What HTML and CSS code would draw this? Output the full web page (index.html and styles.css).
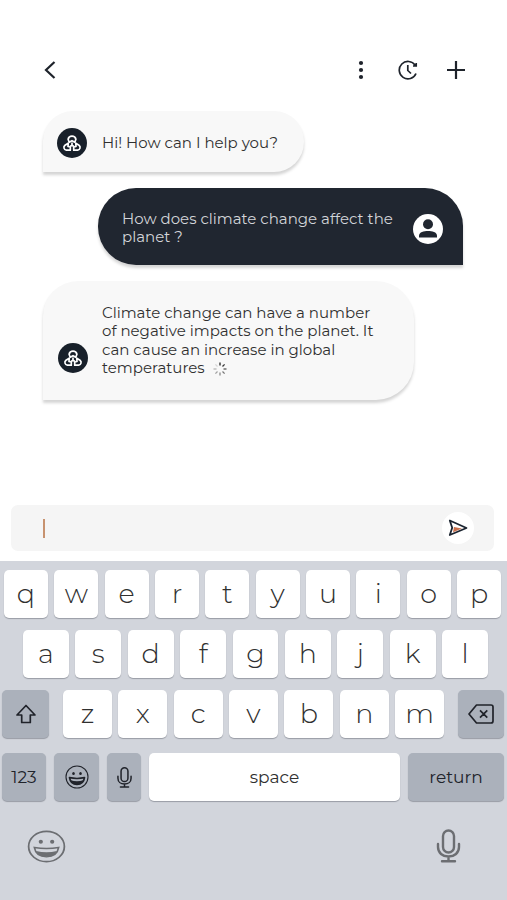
FILE: index.html
```
<!DOCTYPE html>
<html lang="en">
<head>
    <meta charset="UTF-8">
    <title>Chat</title>
    <link rel="stylesheet" href="styles.css">
</head>
<body>
    <!-- Shared icons -->
    <svg class="sprite">
        <symbol id="bot" viewBox="0 0 30 30">
            <circle cx="15" cy="15" r="15" fill="#18202a"/>
            <g fill="none" stroke="#fff" stroke-width="1.7" stroke-linejoin="round">
                <path d="M12.2 14.3 L11.1 11.3 A4 4 0 0 1 18.9 11.3 L17.8 14.3 L15 12.7 Z"/>
                <path d="M11.2 15.2 L8 17.2 A2.8 2.8 0 0 0 9.3 22.2 H13.3 V19 L11 18.5 Z"/>
                <path d="M18.8 15.2 L22 17.2 A2.8 2.8 0 0 1 20.7 22.2 H16.7 V19 L19 18.5 Z"/>
                <path d="M15 14.4 V17.2 L13 18.5 M15 17.2 L17 18.5"/>
            </g>
        </symbol>
        <symbol id="smile" viewBox="0 0 24 24">
            <circle cx="12" cy="12" r="11" fill="none" stroke="currentColor" stroke-width="1.1"/>
            <ellipse cx="8.5" cy="8.5" rx="1.3" ry="1.5" fill="currentColor"/>
            <ellipse cx="15.5" cy="8.5" rx="1.3" ry="1.5" fill="currentColor"/>
            <path d="M4.5 12.7 Q12 14.3 19.5 12.7 Q18.5 19.5 12 19.5 Q5.5 19.5 4.5 12.7 Z" fill="none" stroke="currentColor"/>
            <path d="M5.6 15.2 Q12 17.2 18.4 15.2 Q16.8 19.5 12 19.5 Q7.2 19.5 5.6 15.2 Z" fill="currentColor"/>
        </symbol>
        <symbol id="mic" viewBox="0 0 24 34">
            <g fill="none" stroke="currentColor" stroke-width="2.4" stroke-linecap="round">
                <rect x="6.5" y="1.5" width="11" height="22" rx="5.5"/>
                <path d="M1.5 15 V18 C1.5 24 6 27.5 12 27.5 S22.5 24 22.5 18 V15 M12 27.5 V32.2 M5.5 32.2 H18.5"/>
            </g>
        </symbol>
    </svg>

    <div class="phone">
        <!-- Top bar -->
        <header class="topbar">
            <svg class="icon-back" viewBox="0 0 12 18"><path d="M10.5 1 L2 9 L10.5 17"/></svg>
            <div class="actions">
                <svg class="icon-more" viewBox="0 0 6 20"><circle cx="3" cy="3" r="2.1"/><circle cx="3" cy="10" r="2.1"/><circle cx="3" cy="17" r="2.1"/></svg>
                <svg class="icon-history" viewBox="0 0 20 20">
                    <path d="M18 13.5 A8.7 8.7 0 1 1 17.2 5.3 M15 6 H18.2 V3 M9.8 5 V10.5 L13 13.5"/>
                </svg>
                <svg class="icon-plus" viewBox="0 0 20 20"><path d="M10 1 V19 M1 10 H19"/></svg>
            </div>
        </header>

        <!-- Messages -->
        <main class="chat">
            <div class="bubble bot first">
                <svg class="avatar"><use href="#bot"/></svg>
                <p>Hi! How can I help you?</p>
            </div>
            <div class="bubble user">
                <p>How does climate change affect the<br>planet ?</p>
                <svg class="avatar" viewBox="0 0 30 30">
                    <circle cx="15" cy="15" r="15" fill="#fff"/>
                    <circle cx="15" cy="10.3" r="5" fill="#202630"/>
                    <path d="M6 23.5 V21.5 C6 18 11 16.9 15 16.9 S24 18 24 21.5 V23.5 Z" fill="#202630"/>
                </svg>
            </div>
            <div class="bubble bot second">
                <svg class="avatar"><use href="#bot"/></svg>
                <p>
                    Climate change can have a number<br>
                    of negative impacts on the planet. It<br>
                    can cause an increase in global<br>
                    temperatures
                    <svg class="spinner" viewBox="0 0 14 14">
                        <g stroke="#222" stroke-width="1.3">
                            <path d="M7 .5 V3.5"/>
                            <path d="M11.6 2.4 L9.5 4.5" opacity=".9"/>
                            <path d="M13.5 7 H10.5" opacity=".75"/>
                            <path d="M11.6 11.6 L9.5 9.5" opacity=".6"/>
                            <path d="M7 13.5 V10.5" opacity=".5"/>
                            <path d="M2.4 11.6 L4.5 9.5" opacity=".4"/>
                            <path d="M.5 7 H3.5" opacity=".3"/>
                            <path d="M2.4 2.4 L4.5 4.5" opacity=".15"/>
                        </g>
                    </svg>
                </p>
            </div>
        </main>

        <!-- Message input -->
        <div class="composer">
            <span class="caret"></span>
            <button class="send">
                <svg viewBox="0 0 20 18">
                    <path d="M6 8 L14 9.5 L5 13.2 Z" fill="#c96f4c"/>
                    <path d="M1.8 1.5 L18.5 9 L1.8 16 L4.2 8.8 Z" fill="none" stroke="#1b2430" stroke-width="1.8" stroke-linejoin="round"/>
                </svg>
            </button>
        </div>

        <!-- Keyboard -->
        <div class="keyboard">
            <div class="row row-top">
                <button class="key">q</button>
                <button class="key">w</button>
                <button class="key">e</button>
                <button class="key">r</button>
                <button class="key">t</button>
                <button class="key">y</button>
                <button class="key">u</button>
                <button class="key">i</button>
                <button class="key">o</button>
                <button class="key">p</button>
            </div>
            <div class="row row-home">
                <button class="key">a</button>
                <button class="key">s</button>
                <button class="key">d</button>
                <button class="key">f</button>
                <button class="key">g</button>
                <button class="key">h</button>
                <button class="key">j</button>
                <button class="key">k</button>
                <button class="key">l</button>
            </div>
            <div class="row row-bottom">
                <button class="key dark shift">
                    <svg viewBox="0 0 22 20"><path d="M11 1.5 L20 11 H15.3 V18.5 H6.7 V11 H2 Z"/></svg>
                </button>
                <div class="letters">
                    <button class="key">z</button>
                    <button class="key">x</button>
                    <button class="key">c</button>
                    <button class="key">v</button>
                    <button class="key">b</button>
                    <button class="key">n</button>
                    <button class="key">m</button>
                </div>
                <button class="key dark delete">
                    <svg viewBox="0 0 26 20"><path d="M8.5 1 H23 Q25 1 25 3 V17 Q25 19 23 19 H8.5 L1 10 Z M12 6.3 L19.3 13.7 M19.3 6.3 L12 13.7"/></svg>
                </button>
            </div>
            <div class="row row-space">
                <button class="key dark word">123</button>
                <button class="key dark emoji"><svg><use href="#smile"/></svg></button>
                <button class="key dark voice"><svg><use href="#mic"/></svg></button>
                <button class="key word">space</button>
                <button class="key dark word">return</button>
            </div>
            <div class="system">
                <svg class="system-smile" viewBox="0 0 24 24" preserveAspectRatio="none"><use href="#smile"/></svg>
                <svg class="system-mic"><use href="#mic"/></svg>
            </div>
        </div>
    </div>
</body>
</html>
```

FILE: styles.css
```
* {
    box-sizing: border-box;
}
body {
    margin: 0;
    background: #fff;
    font-family: Montserrat, Inter, sans-serif;
    color: #303030;
}
button {
    border: none;
    padding: 0;
    font-family: inherit;
    color: inherit;
}
svg {
    display: block;
}
.sprite {
    display: none;
}
.phone {
    width: 507px;
    height: 900px;
    display: flex;
    flex-direction: column;
    overflow: hidden;
}

/* top bar */
.topbar {
    height: 111px;
    padding: 29px 41px 0 44px;
    display: flex;
    align-items: center;
    justify-content: space-between;
    flex-shrink: 0;
}
.topbar svg {
    fill: none;
    stroke: #1e232b;
    stroke-width: 2.2;
}
.topbar .icon-back {
    width: 12px;
    height: 18px;
}
.actions {
    display: flex;
    align-items: center;
}
.topbar .icon-more {
    width: 6px;
    height: 20px;
    fill: #1e232b;
    stroke: none;
    margin-right: 34px;
}
.topbar .icon-history {
    width: 20px;
    height: 20px;
    stroke-width: 1.7;
    margin-right: 28px;
}
.topbar .icon-plus {
    width: 20px;
    height: 20px;
}

/* messages */
.chat {
    height: 394px;
    padding: 0 43px;
    display: flex;
    flex-direction: column;
    align-items: flex-start;
    gap: 16px;
    flex-shrink: 0;
}
.bubble {
    display: flex;
    align-items: center;
    font-size: 15px;
    line-height: 18.3px;
    box-shadow: 0 3px 3px rgba(0, 0, 0, 0.17);
}
.bubble p {
    margin: 0;
    white-space: nowrap;
}
.avatar {
    width: 30px;
    height: 30px;
    flex-shrink: 0;
}
.bot {
    background: #f8f8f8;
    padding-left: 14px;
    gap: 15px;
}
.first {
    width: 261px;
    height: 61px;
    padding-top: 3px;
    border-radius: 30px 30px 30px 0;
}
.user {
    width: 365px;
    height: 77px;
    align-self: flex-end;
    justify-content: space-between;
    padding: 4px 20px 0 24px;
    margin-right: 1px;
    background: #202630;
    color: #d3d5d9;
    border-radius: 38px 38px 0 38px;
}
.user p {
    margin-top: -1px;
}
.second {
    width: 371px;
    height: 119px;
    border-radius: 35px 38px 38px 0;
}
.second .avatar {
    margin: 34px 0 0 1px;
}
.second p {
    margin: 0 0 0 -1px;
}
.spinner {
    display: inline-block;
    width: 14px;
    height: 14px;
    margin-left: 4px;
    vertical-align: -3px;
}

/* message input */
.composer {
    height: 46px;
    margin: 0 13px 10px 11px;
    padding: 0 20px 0 32px;
    display: flex;
    align-items: center;
    justify-content: space-between;
    background: #f5f5f5;
    border-radius: 7px;
    flex-shrink: 0;
}
.caret {
    width: 2px;
    height: 19px;
    background: #c7926f;
}
.send {
    width: 32px;
    height: 32px;
    display: flex;
    align-items: center;
    justify-content: center;
    background: #fff;
    border-radius: 50%;
}
.send svg {
    width: 20px;
    height: 18px;
}

/* keyboard */
.keyboard {
    flex: 1;
    padding-top: 9px;
    background: #d2d5dc;
}
.row {
    height: 48px;
    display: grid;
    margin-bottom: 12px;
}
.row-top {
    grid-template-columns: repeat(10, 1fr);
    gap: 6.5px;
    padding: 0 6px 0 4px;
}
.row-home {
    grid-template-columns: repeat(9, 1fr);
    gap: 6.7px;
    padding: 0 19px 0 23px;
}
.row-bottom {
    grid-template-columns: 47px 381px 46px;
    gap: 14px;
    padding-left: 2px;
    margin-bottom: 15px;
}
.letters {
    display: grid;
    grid-template-columns: repeat(7, 1fr);
    gap: 6.5px;
}
.row-space {
    grid-template-columns: 44px 45px 34px 251px 96px;
    gap: 8px;
    padding-left: 2px;
}
.key {
    display: flex;
    align-items: center;
    justify-content: center;
    padding-bottom: 2px;
    background: #fff;
    border-radius: 5px;
    box-shadow: 0 1px 1px #989ca5;
    font-size: 27px;
    font-weight: 300;
}
.key svg {
    fill: none;
    stroke: #20232a;
    stroke-width: 1.7;
    stroke-linejoin: round;
}
.dark {
    padding-bottom: 0;
    background: #abb1bb;
    color: #20232a;
}
.word {
    padding-bottom: 0;
    font-size: 17px;
    font-weight: 400;
}
.shift svg {
    width: 22px;
    height: 20px;
}
.delete svg {
    width: 26px;
    height: 20px;
}
.key.emoji svg {
    width: 24px;
    height: 24px;
    stroke: none;
}
.key.voice svg {
    width: 15px;
    height: 23px;
    stroke: none;
}
.system {
    display: flex;
    align-items: center;
    justify-content: space-between;
    padding: 16px 46px 0 27px;
    color: #6c6e72;
}
.system-smile {
    width: 39px;
    height: 33px;
}
.system-mic {
    width: 25px;
    height: 34px;
}
```
